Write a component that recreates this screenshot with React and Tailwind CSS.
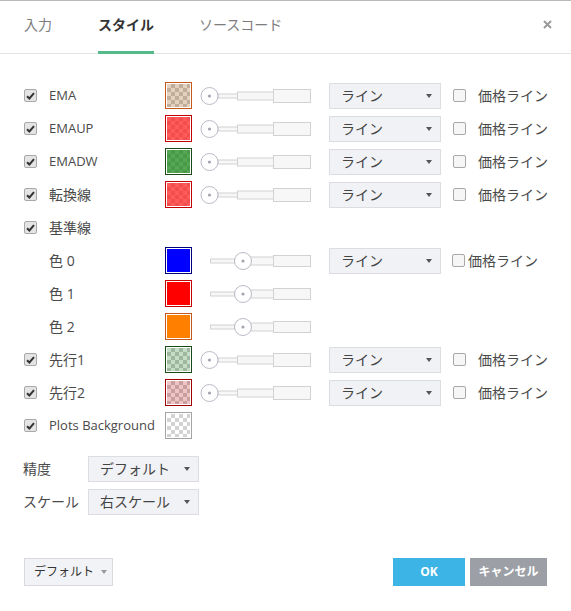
import React from 'react';

const FONT = "font-['Open_Sans','Noto_Sans_CJK_JP',sans-serif]";
const CHECKER = 'bg-[conic-gradient(#c9c9c9_25%,#ffffff_0_50%,#c9c9c9_0_75%,#ffffff_0)] bg-[length:8px_8px]';

const Check = ({ checked = true }) => (
  <span className={`flex items-center justify-center w-[13px] h-[13px] rounded-[2px] border border-[#a8a8a8] ${checked ? 'bg-[#e4e4e4]' : 'bg-[#f6f6f6]'}`}>
    {checked && (
      <svg width="9" height="8" viewBox="0 0 9 8">
        <path d="M1 4.2 L3.4 6.5 L8 1.2" fill="none" stroke="#333" strokeWidth="2" />
      </svg>
    )}
  </span>
);

const Swatch = ({ border, fill, solid }) => (
  <div className={`w-[27px] h-[27px] border p-[1px] bg-white shrink-0 ${border}`}>
    <div className={`w-full h-full ${solid ? '' : CHECKER}`}>
      <div className={`w-full h-full ${fill}`} />
    </div>
  </div>
);

// line width slider: knob at the left
const SliderA = () => (
  <svg width="111" height="20" viewBox="0 0 111 20" className="ml-[8px] shrink-0">
    <rect x="18" y="8" width="20" height="4" fill="#f7f7f7" stroke="#d2d2d2" />
    <rect x="37.5" y="6" width="36" height="8" fill="#f7f7f7" stroke="#d2d2d2" />
    <rect x="73.5" y="3.5" width="37" height="13" fill="#f7f7f7" stroke="#d2d2d2" />
    <circle cx="9.5" cy="10" r="8.5" fill="#fff" stroke="#b9bcc6" />
    <circle cx="9.5" cy="10" r="1.6" fill="#a3a6b0" />
  </svg>
);

// transparency slider: knob in the middle
const SliderB = () => (
  <svg width="101" height="20" viewBox="0 0 101 20" className="ml-[18px] shrink-0">
    <rect x="0.5" y="8" width="24" height="4" fill="#f7f7f7" stroke="#d2d2d2" />
    <rect x="40" y="6" width="24" height="8" fill="#f7f7f7" stroke="#d2d2d2" />
    <rect x="63.5" y="4.5" width="37" height="11" fill="#f7f7f7" stroke="#d2d2d2" />
    <circle cx="33" cy="10" r="8.5" fill="#fff" stroke="#b9bcc6" />
    <circle cx="33" cy="10" r="1.6" fill="#a3a6b0" />
  </svg>
);

const Caret = ({ color = 'border-t-[#555]' }) => (
  <span className={`w-0 h-0 border-l-[3.5px] border-r-[3.5px] border-t-[4px] border-l-transparent border-r-transparent ${color}`} />
);

const Select = ({ label, className = 'w-[112px]' }) => (
  <div className={`flex items-center justify-between h-[26px] pl-[11px] pr-[8px] bg-[#f1f2f6] border border-[#dcdde1] text-[#444] text-[14px] shrink-0 ${className}`}>
    <span>{label}</span>
    <Caret />
  </div>
);

const rows = [
  { cb: true, label: 'EMA', border: 'border-[#c4581c]', fill: 'bg-[#b07a44]/35', slider: 'A', select: true },
  { cb: true, label: 'EMAUP', border: 'border-[#c40000]', fill: 'bg-[#ff2424]/75', slider: 'A', select: true },
  { cb: true, label: 'EMADW', border: 'border-[#174a17]', fill: 'bg-[#1c8a1c]/75', slider: 'A', select: true },
  { cb: true, label: '転換線', border: 'border-[#c40000]', fill: 'bg-[#ff2424]/75', slider: 'A', select: true },
  { cb: true, label: '基準線' },
  { cb: false, label: '色 0', border: 'border-[#00007a]', fill: 'bg-[#0000ff]', solid: true, slider: 'B', select: true, tight: true },
  { cb: false, label: '色 1', border: 'border-[#c40000]', fill: 'bg-[#ff0000]', solid: true, slider: 'B' },
  { cb: false, label: '色 2', border: 'border-[#c4581c]', fill: 'bg-[#ff8000]', solid: true, slider: 'B' },
  { cb: true, label: '先行1', border: 'border-[#174a17]', fill: 'bg-[#3c903c]/30', slider: 'A', select: true },
  { cb: true, label: '先行2', border: 'border-[#a00000]', fill: 'bg-[#c83c3c]/30', slider: 'A', select: true },
  { cb: true, label: 'Plots Background', border: 'border-[#a4a4a4]', fill: 'bg-white/20' },
];

const Row = ({ row }) => {
  const jp = /[^\x00-\x7f]/.test(row.label);
  return (
    <div className="flex items-center h-[33px] pl-[24px]">
      <div className="w-[25px] shrink-0">{row.cb && <Check />}</div>
      <div className={`w-[116px] shrink-0 text-[#4a4a4a] whitespace-nowrap ${jp ? 'text-[14px]' : 'text-[13px]'}`}>{row.label}</div>
      {row.border && <Swatch border={row.border} fill={row.fill} solid={row.solid} />}
      {row.slider === 'A' && <SliderA />}
      {row.slider === 'B' && <SliderB />}
      {row.select && (
        <>
          <div className="ml-[18px]">
            <Select label="ライン" />
          </div>
          <div className={row.tight ? 'ml-[11px]' : 'ml-[12px]'}>
            <Check checked={false} />
          </div>
          <span className={`text-[14px] text-[#4a4a4a] whitespace-nowrap ${row.tight ? 'ml-[3px]' : 'ml-[12px]'}`}>価格ライン</span>
        </>
      )}
    </div>
  );
};

export default function App() {
  return (
    <div className={`w-[571px] h-[611px] bg-white border-t border-[#b9b9b9] flex flex-col ${FONT}`}>
      {/* Tabs */}
      <div className="flex items-start h-[53px] border-b border-[#e3e3e3] pl-[24px] pr-[19px] text-[14px]">
        <div className="h-[53px] -mb-px flex items-center pb-[3px] border-b-[3px] border-transparent text-[#7d7d7d]">入力</div>
        <div className="h-[53px] -mb-px ml-[46px] flex items-center pb-[3px] border-b-[3px] border-[#55b98a] text-[#333] font-bold">スタイル</div>
        <div className="h-[53px] -mb-px ml-[45px] flex items-center pb-[3px] border-b-[3px] border-transparent text-[#7d7d7d]">ソースコード</div>
        <svg width="9" height="9" viewBox="0 0 9 9" className="ml-auto mt-[19px]">
          <path d="M1 1 L8 8 M8 1 L1 8" stroke="#9a9a9a" strokeWidth="2" />
        </svg>
      </div>

      {/* Plot rows */}
      <div className="pt-[25px]">
        {rows.map((r) => (
          <Row key={r.label} row={r} />
        ))}
      </div>

      {/* Precision / scale */}
      <div className="mt-[10px]">
        <div className="flex items-center h-[33px] pl-[23px]">
          <span className="w-[65px] text-[14px] text-[#4a4a4a]">精度</span>
          <Select label="デフォルト" className="w-[111px]" />
        </div>
        <div className="flex items-center h-[33px] pl-[23px]">
          <span className="w-[65px] text-[14px] text-[#4a4a4a]">スケール</span>
          <Select label="右スケール" className="w-[111px]" />
        </div>
      </div>

      {/* Footer */}
      <div className="mt-[40px] flex items-center px-[24px]">
        <div className="flex items-center gap-[7px] h-[28px] w-[89px] pl-[9px] bg-[#f2f3f6] border border-[#d9dadd] text-[12px] text-[#333] whitespace-nowrap">
          <span>デフォルト</span>
          <Caret color="border-t-[#9a9a9a]" />
        </div>
        <button className="ml-auto h-[28px] w-[72px] bg-[#3cb4e5] text-white text-[12px] font-bold">OK</button>
        <button className="ml-[5px] h-[28px] w-[77px] bg-[#9c9fa5] text-white text-[12px] font-bold">キャンセル</button>
      </div>
    </div>
  );
}
